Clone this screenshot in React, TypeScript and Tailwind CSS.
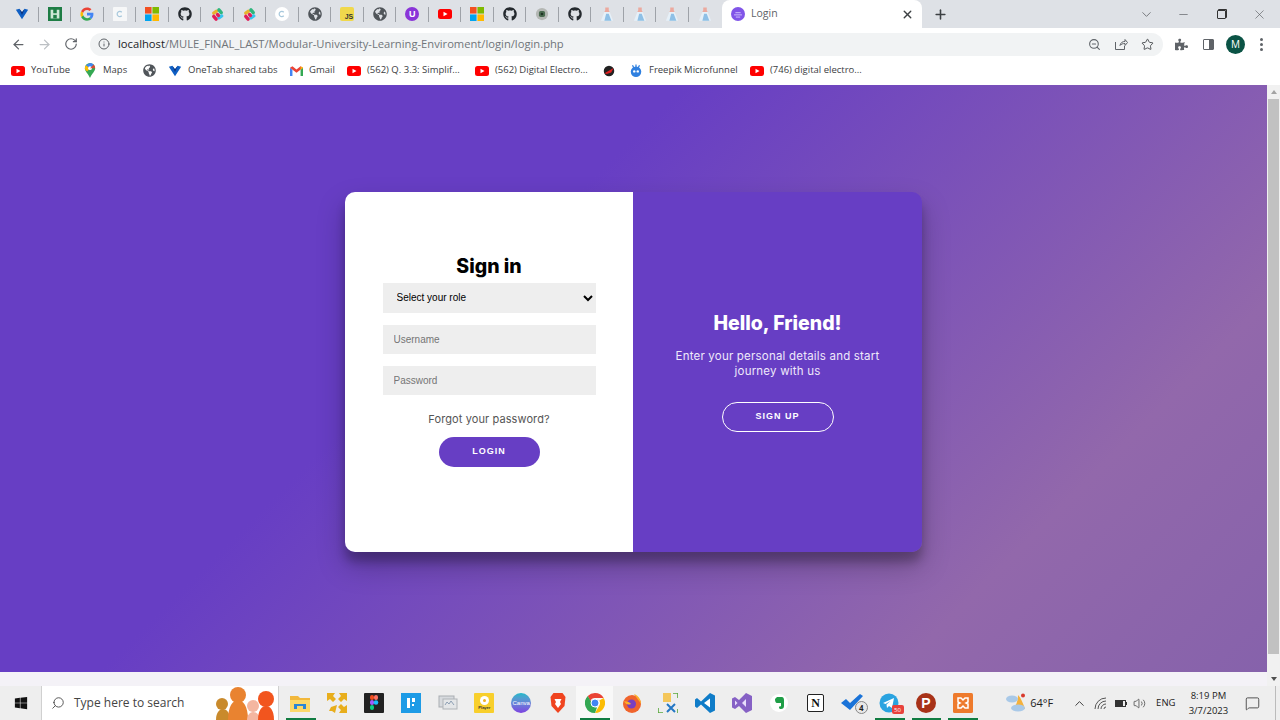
import { ArrowLeft, ArrowRight, RotateCw, Info, ZoomOut, Star, ChevronDown, Minus, X, Plus, Search, Volume2, ChevronUp, MessageSquare } from 'lucide-react'
import { FaGithub, FaGlobeAmericas, FaWindows, FaPuzzlePiece } from 'react-icons/fa'
import type { ReactNode } from 'react'

// favicons
const OneTab = ({ s = 14 }: { s?: number }) => (
  <svg width={s} height={s} viewBox="0 0 16 16"><path d="M1 3l4-1 3 4 3-4 4 1-7 11z" fill="#0f5fc4" /><path d="M5 2l3 4 3-4-3 7z" fill="#0a2f7a" /></svg>
)
const Sheet = () => (
  <svg width="14" height="14" viewBox="0 0 16 16"><rect width="16" height="16" fill="#1e7d45" /><path d="M3 3h3v4h4V3h3v10H3z" fill="#cfe8d6" /><rect x="6" y="9" width="4" height="4" fill="#1e7d45" /></svg>
)
const GoogleG = () => (
  <svg width="14" height="14" viewBox="0 0 48 48">
    <path fill="#4285f4" d="M46 24.5c0-1.6-.1-3.100-.4-4.500H24v9h12.400c-.5 2.800-2.100 5.200-4.500 6.800l7 5.400C43 37 46 31.300 46 24.500z" />
    <path fill="#34a853" d="M24 47c6.200 0 11.400-2 15-5.500l-7-5.400c-2 1.300-4.600 2.100-8 2.100-6 0-11.100-4-12.900-9.500l-7.300 5.600C7.500 41.800 15.200 47 24 47z" />
    <path fill="#fbbc05" d="M11.100 29c-.5-1.400-.7-3-.7-4.500s.3-3.100.7-4.500l-7.300-5.600C2.300 17.500 1.500 20.900 1.500 24.500s.8 7 2.300 10z" />
    <path fill="#ea4335" d="M24 10.500c3.400 0 6.400 1.200 8.800 3.400l6.500-6.500C35.400 3.800 30.200 1.500 24 1.500 15.200 1.500 7.500 6.700 3.800 14.400l7.300 5.600C12.900 14.500 18 10.500 24 10.500z" />
  </svg>
)
const PaleSquare = () => (
  <svg width="14" height="14" viewBox="0 0 16 16"><rect width="16" height="16" rx="1" fill="#f6f7f8" /><path d="M10 6a3 3 0 1 0 0 4" stroke="#a8c8dc" strokeWidth="1.400" fill="none" /></svg>
)
const PaleCircle = () => (
  <svg width="14" height="14" viewBox="0 0 16 16"><circle cx="8" cy="8" r="8" fill="#fff" /><path d="M10 6a3 3 0 1 0 0 4" stroke="#a8c8dc" strokeWidth="1.400" fill="none" /></svg>
)
const MsGrid = () => (
  <svg width="14" height="14" viewBox="0 0 16 16"><rect width="7.500" height="7.500" fill="#f25022" /><rect x="8.500" width="7.500" height="7.500" fill="#7fba00" /><rect y="8.500" width="7.500" height="7.500" fill="#00a4ef" /><rect x="8.500" y="8.500" width="7.500" height="7.500" fill="#ffb900" /></svg>
)
const Slack = () => (
  <svg width="15" height="15" viewBox="0 0 16 16" strokeWidth="3.600" strokeLinecap="round">
    <path d="M4 6.500l3-2" stroke="#e8b32e" /><path d="M9.500 3l2.500 3" stroke="#2eb67d" /><path d="M12.500 9.500l-3 2" stroke="#36c5f0" /><path d="M6.500 13L4 10" stroke="#e01e5a" /><path d="M8 8l1 1" stroke="#e01e5a" />
  </svg>
)
const Gh = () => <FaGithub size={14} color="#24292e" />
const Globe = ({ s = 13 }: { s?: number }) => <FaGlobeAmericas size={s} color="#50555a" />
const JsBox = () => (
  <div className="w-[14px] h-[14px] rounded-[2px] bg-[#f0d84c] flex items-end justify-end text-[7px] leading-[9px] font-bold text-[#333] pr-[1px] font-['Liberation_Sans',sans-serif]">JS</div>
)
const PurpleU = () => (
  <div className="w-[14px] h-[14px] rounded-full bg-[#8a35d8] flex items-center justify-center text-[9px] leading-none font-bold text-white font-['Liberation_Sans',sans-serif]">U</div>
)
const Yt = () => (
  <svg width="14" height="10" viewBox="0 0 14 10"><rect width="14" height="10" rx="2.500" fill="#f00" /><path d="M5.500 2.700v4.600L9.500 5z" fill="#fff" /></svg>
)
const Chip = () => (
  <svg width="14" height="14" viewBox="0 0 16 16"><circle cx="8" cy="8" r="7" fill="#b4b7b4" /><rect x="4.500" y="4.500" width="7" height="7" rx="2" fill="#4a6a50" /><circle cx="8" cy="8" r="1.500" fill="#1f3324" /></svg>
)
const Flask = () => (
  <svg width="14" height="15" viewBox="0 0 16 16"><path d="M6 0h4v3l1 2H5l1-2z" fill="#eca99e" /><path d="M5 5h6l4 10H1z" fill="#e6f0f8" /><path d="M7 7h3l3 8H5z" fill="#8fc0e6" /></svg>
)
const TabLogo = () => (
  <svg width="14" height="14" viewBox="0 0 16 16"><circle cx="8" cy="8" r="8" fill="#8155e8" /><path d="M3.500 9h9M5 6.500h6M5.500 11.500h5" stroke="#d9ccff" strokeWidth="1" /></svg>
)
const Maps = () => (
  <svg width="12" height="15" viewBox="0 0 12 16"><path d="M6 0a5.500 5.500 0 0 1 5.500 5.500C11.500 9 8 11 6 16 4 11 .5 9 .5 5.500A5.500 5.500 0 0 1 6 0z" fill="#34a853" /><path d="M1.500 2.500L6 0a5.500 5.500 0 0 1 4 1.700L6 5.500z" fill="#4285f4" /><path d="M.5 5.500c0-1 .3-2.200 1-3L6 5.500 3 9C1.500 8 .5 7 .5 5.500z" fill="#fbbc05" /><circle cx="6" cy="5.500" r="2" fill="#fff" /><path d="M10 1.700a5.500 5.500 0 0 1 1.500 3.800L6 5.500z" fill="#ea4335" opacity=".9" /></svg>
)
const Gmail = () => (
  <svg width="13" height="10" viewBox="0 0 16 12"><path d="M0 2v10h3V4.500z" fill="#4285f4" /><path d="M16 2v10h-3V4.500z" fill="#34a853" /><path d="M0 2l3-2 5 4 5-4 3 2-8 6z" fill="#ea4335" /><path d="M13 0l3 2-3 2.500z" fill="#fbbc05" /></svg>
)
const RedSwirl = () => (
  <svg width="12" height="12" viewBox="0 0 16 16"><circle cx="8" cy="8" r="7" fill="#222" /><path d="M2 11L14 4l-3 6-6 2z" fill="#e02020" /></svg>
)
const Freepik = () => (
  <svg width="14" height="15" viewBox="0 0 16 16"><circle cx="8" cy="9.500" r="6" fill="#2f80e0" /><circle cx="6" cy="9" r="1.400" fill="#fff" /><circle cx="10" cy="9" r="1.400" fill="#fff" /><path d="M8 1v3M4 2l1.500 3M12 2l-1.500 3" stroke="#2f80e0" strokeWidth="1.400" /></svg>
)

const tabIcons: ReactNode[] = [
  <OneTab />, <Sheet />, <GoogleG />, <PaleSquare />, <MsGrid />, <Gh />, <Slack />, <Slack />, <PaleCircle />, <Globe s={14} />, <JsBox />, <Globe s={14} />, <PurpleU />, <Yt />, <MsGrid />, <Gh />, <Chip />, <Gh />, <Flask />, <Flask />, <Flask />, <Flask />,
]

const bookmarks: { icon: ReactNode; text?: string; w: string }[] = [
  { icon: <Yt />, text: 'YouTube', w: 'w-[72px]' },
  { icon: <Maps />, text: 'Maps', w: 'w-[59px]' },
  { icon: <Globe />, w: 'w-[26px]' },
  { icon: <OneTab />, text: 'OneTab shared tabs', w: 'w-[121px]' },
  { icon: <Gmail />, text: 'Gmail', w: 'w-[58px]' },
  { icon: <Yt />, text: '(562) Q. 3.3: Simplif...', w: 'w-[128px]' },
  { icon: <Yt />, text: '(562) Digital Electro...', w: 'w-[127px]' },
  { icon: <RedSwirl />, w: 'w-[27px]' },
  { icon: <Freepik />, text: 'Freepik Microfunnel', w: 'w-[121px]' },
  { icon: <Yt />, text: '(746) digital electro...', w: 'w-[120px]' },
]

// taskbar apps
const Explorer = () => (
  <svg width="20" height="18" viewBox="0 0 20 18"><path d="M0 2h8l2 2h10v3H0z" fill="#f2b83c" /><path d="M0 6h20v12H0z" fill="#fbd96a" /><path d="M4 10h12v5h-3v-3H7v3H4z" fill="#2a86d6" /></svg>
)
const YellowArrows = () => (
  <svg width="20" height="20" viewBox="0 0 20 20"><path d="M0 0h8L6 3l3 3-3 3-3-3-3 2zM20 0v8l-3-2-3 3-3-3 3-3-2-3zM20 20h-8l2-3-3-3 3-3 3 3 3-2zM10 12l-2 8-3-2-3 0 2-4z" fill="#e8ae1c" /></svg>
)
const Figma = () => (
  <svg width="20" height="20" viewBox="0 0 20 20"><rect width="20" height="20" rx="1" fill="#222" /><rect x="6" y="2" width="4" height="5" rx="2" fill="#f24e1e" /><rect x="10" y="2" width="4" height="5" rx="2" fill="#ff7262" /><rect x="6" y="7" width="4" height="5" rx="2" fill="#a259ff" /><circle cx="12" cy="9.500" r="2.300" fill="#1abcfe" /><rect x="6" y="12" width="4" height="5" rx="2" fill="#0acf83" /></svg>
)
const BlueSquare = () => (
  <svg width="20" height="20" viewBox="0 0 20 20"><rect width="20" height="20" fill="#1d9be6" /><rect x="6" y="5" width="3" height="10" fill="#fff" /><rect x="11" y="5" width="3" height="4" fill="#fff" /><rect x="11" y="11" width="2" height="2" fill="#fff" /></svg>
)
const Monitor = () => (
  <svg width="20" height="18" viewBox="0 0 20 18"><rect x="1" y="2" width="15" height="11" fill="#d7dade" stroke="#a9adb2" /><rect x="5" y="5" width="14" height="10" fill="#e4e6e8" stroke="#b0b4b8" /><path d="M7 11l2-3 2 2 2-3 3 4" stroke="#8ea0b4" fill="none" /></svg>
)
const Player = () => (
  <div className="w-5 h-5 bg-[#f8cf2c] rounded-[1px] flex flex-col items-center justify-center">
    <div className="w-[9px] h-[9px] rounded-full bg-white flex items-center justify-center"><div className="w-[3px] h-[3px] rounded-full bg-[#f0b020]" /></div>
    <span className="text-[4px] leading-[5px] font-bold text-[#333] font-['Liberation_Sans',sans-serif]">Player</span>
  </div>
)
const Canva = () => (
  <div className="w-5 h-5 rounded-full bg-gradient-to-b from-[#19b9c9] to-[#7b3ee0] flex items-center justify-center text-[6px] text-white font-['Liberation_Sans',sans-serif]">Canva</div>
)
const Brave = () => (
  <svg width="18" height="20" viewBox="0 0 17 20"><path d="M4 0h9l3 4-1 9-6.500 7L2 13 1 4z" fill="#f0441f" /><path d="M5 6h7l-1.500 3 1 2-3 4-3-4 1-2z" fill="#fff" /></svg>
)
const Chrome = () => (
  <svg width="20" height="20" viewBox="0 0 20 20">
    <path d="M10 0a10 10 0 0 1 8.700 5H10a5 5 0 0 0-4.700 3.300L2.800 3A10 10 0 0 1 10 0z" fill="#ea4335" />
    <path d="M18.700 5A10 10 0 0 1 10 20l4.300-7.500A5 5 0 0 0 14.300 7.500z" fill="#fbbc05" />
    <path d="M10 20A10 10 0 0 1 2.800 3l4.300 7.500A5 5 0 0 0 12 14.600z" fill="#34a853" />
    <circle cx="10" cy="10" r="4" fill="#4285f4" stroke="#fff" strokeWidth="1" />
  </svg>
)
const Firefox = () => (
  <svg width="20" height="20" viewBox="0 0 20 20"><circle cx="10" cy="11" r="9" fill="#f0642c" /><path d="M12 1c5 2 7 6 7 10-2-4-4-5-7-10z" fill="#fcb12a" /><circle cx="9.500" cy="11" r="4.500" fill="#7a3fc0" /><path d="M2 8c2 1 5 0 7 3-3 1-5 1-7-3z" fill="#fcb12a" /></svg>
)
const Tools = () => (
  <svg width="20" height="20" viewBox="0 0 20 20" fill="none"><path d="M5 0h8v9H5z" fill="#f4c65a" /><path d="M15 0h5v5M0 20v-5M0 20h5M20 20v-4" stroke="#5aa83c" strokeWidth="1.600" /><path d="M9 11l8 8M17 11l-8 8" stroke="#2477c4" strokeWidth="2" /></svg>
)
const VsCode = () => (
  <svg width="20" height="20" viewBox="0 0 20 20"><path d="M15 0l5 2.500v15L15 20 6 11.500 2 15l-2-1.500V6.500L2 5l4 3.500z" fill="#0f7cc8" /><path d="M15 5.500L9 10l6 4.500z" fill="#fff" /></svg>
)
const VisualStudio = () => (
  <svg width="20" height="20" viewBox="0 0 20 20"><path d="M14 0l6 3v14l-6 3-7-7-4 3-3-1.500v-9L3 4l4 3z" fill="#8661c5" /><path d="M14 6l-4 4 4 4z" fill="#e8defc" /><path d="M3 7.500v5l2.500-2.500z" fill="#e8defc" /></svg>
)
const Evernote = () => (
  <svg width="18" height="18" viewBox="0 0 18 18"><circle cx="9" cy="9" r="9" fill="#fff" /><path d="M5 5l2-2h5c1 0 2 1 2 3v6c0 2-1 3-3 3-1 0-2-.5-2-1.500 0-1 1-1.500 2-1.200V9H7C5.500 9 5 7 5 5z" fill="#1f9e47" /></svg>
)
const Notion = () => (
  <div className="w-[17px] h-[18px] bg-white border-[1.5px] border-[#222] rounded-[2px] flex items-center justify-center text-[12px] leading-none font-bold text-[#111] font-['Liberation_Serif',serif]">N</div>
)
const Check = () => (
  <svg width="24" height="20" viewBox="0 0 24 20"><path d="M1 10l5-4 4 4L20 1l3 2-13 14z" fill="#1a73d8" /></svg>
)
const Telegram = () => (
  <svg width="20" height="20" viewBox="0 0 20 20"><circle cx="10" cy="10" r="9.500" fill="#2aa3e0" /><path d="M4 10l11-5-2 10-3-2-2 2-.5-3.500 4-3.500-5 3z" fill="#fff" /></svg>
)
const Psiphon = () => (
  <div className="w-5 h-5 rounded-full bg-[#a83218] flex items-center justify-center text-[14px] leading-none font-bold text-white font-['Liberation_Sans',sans-serif]">P</div>
)
const Xampp = () => (
  <svg width="20" height="20" viewBox="0 0 20 20" fill="none"><rect width="20" height="20" rx="1.500" fill="#ee7a2c" /><path d="M5 5h3l2 2 2-2h3v4l-2 1 2 1v4h-3l-2-2-2 2H5v-4l2-1-2-1z" stroke="#fff" strokeWidth="1.500" /></svg>
)

const apps: { icon: ReactNode; on?: boolean; active?: boolean; extra?: ReactNode }[] = [
  { icon: <Explorer />, on: true },
  { icon: <YellowArrows /> },
  { icon: <Figma /> },
  { icon: <BlueSquare /> },
  { icon: <Monitor /> },
  { icon: <Player /> },
  { icon: <Canva /> },
  { icon: <Brave /> },
  { icon: <Chrome />, on: true, active: true },
  { icon: <Firefox /> },
  { icon: <Tools /> },
  { icon: <VsCode /> },
  { icon: <VisualStudio /> },
  { icon: <Evernote /> },
  { icon: <Notion /> },
  {
    icon: <Check />,
    extra: <span className="absolute right-[3px] bottom-[6px] w-[13px] h-[13px] rounded-full bg-[#e8e8e8] border border-[#888] flex items-center justify-center text-[8px] leading-none font-bold text-[#222]">4</span>,
  },
  {
    icon: <Telegram />,
    on: true,
    extra: <span className="absolute right-[4px] bottom-[6px] w-[12px] h-[9px] rounded-[2px] bg-[#e8413c] flex items-center justify-center text-[6px] leading-none text-white">50</span>,
  },
  { icon: <Psiphon />, on: true },
  { icon: <Xampp />, on: true },
]

function ChromeTop() {
  return (
    <>
      {/* tab strip */}
      <div className="h-[28px] bg-[#dee1e6] flex items-center shrink-0 pl-[6px]">
        {tabIcons.map((icon, i) => (
          <div key={i} className="w-[32.500px] h-full flex items-center justify-center relative">
            {icon}
            {i < 21 && <span className="absolute right-0 top-[7px] h-[15px] w-px bg-[#9ea2a8]" />}
          </div>
        ))}
        <div className="ml-[1px] w-[200px] h-full bg-white rounded-t-[8px] flex items-center pl-[9px] pr-[8px] text-[10.500px] text-[#5f6368]">
          <TabLogo />
          <span className="ml-[6px] flex-1">Login</span>
          <X size={13} strokeWidth={2.500} color="#3c4043" />
        </div>
        <Plus size={15} strokeWidth={2.500} color="#3c4043" className="ml-[11px]" />
        <div className="ml-auto flex items-center text-[#55585c]">
          <ChevronDown size={15} strokeWidth={1.200} className="mr-[23px]" />
          <Minus size={13} strokeWidth={1.200} className="mr-[27px]" />
          <div className="w-[9px] h-[9px] border border-[#333] rounded-[1px] mr-[26px] shadow-[1px_-1px_0_0_#333]" />
          <X size={15} strokeWidth={1} className="mr-[13px]" />
        </div>
      </div>
      {/* toolbar */}
      <div className="h-[28px] pt-[4px] bg-white flex items-center shrink-0">
        <ArrowLeft size={15} color="#5f6368" className="ml-[11px]" />
        <ArrowRight size={15} color="#bcc0c4" className="ml-[11px]" />
        <RotateCw size={14} color="#5f6368" className="ml-[12px]" />
        <div className="ml-[12px] w-[1073px] h-[23px] rounded-full bg-[#f1f3f4] flex items-center pl-[8px] pr-[9px]">
          <Info size={12} color="#5f6368" />
          <span className="ml-[8px] text-[11.200px] text-[#202124]">localhost<span className="text-[#70757a]">/MULE_FINAL_LAST/Modular-University-Learning-Enviroment/login/login.php</span></span>
          <div className="ml-auto flex items-center gap-[13px]">
            <ZoomOut size={13} color="#5f6368" />
            <svg width="14" height="14" viewBox="0 0 14 14" fill="none" stroke="#5f6368" strokeWidth="1"><path d="M1.500 5v7.500h9V9M6 8.500c.5-3 2.500-4 5-4V2.500l2.500 3-2.500 3V6.500c-2 0-4 .5-5 2z" /></svg>
            <Star size={13} color="#3c4043" strokeWidth={1.600} />
          </div>
        </div>
        <FaPuzzlePiece size={13} color="#5f6368" className="ml-[12px]" />
        <div className="ml-[15px] w-[11px] h-[11px] border-[1.500px] border-[#5f6368] rounded-[1px] flex justify-end"><div className="w-[4px] h-full bg-[#5f6368]" /></div>
        <div className="ml-[12px] w-[19px] h-[19px] rounded-full bg-[#0b5345] flex items-center justify-center text-[10px] text-white font-['Open_Sans',sans-serif]">M</div>
        <div className="ml-[15px] flex flex-col gap-[2px]">
          <span className="w-[3px] h-[3px] rounded-full bg-[#5f6368]" />
          <span className="w-[3px] h-[3px] rounded-full bg-[#5f6368]" />
          <span className="w-[3px] h-[3px] rounded-full bg-[#5f6368]" />
        </div>
      </div>
      {/* bookmarks */}
      <div className="h-[29px] bg-white flex items-center shrink-0 pl-[11px] text-[9.500px] text-[#3c4043]">
        {bookmarks.map((b, i) => (
          <div key={i} className={`${b.w} shrink-0 flex items-center gap-[6px] whitespace-nowrap`}>
            <span className="w-[14px] flex justify-center">{b.icon}</span>
            {b.text && <span>{b.text}</span>}
          </div>
        ))}
      </div>
    </>
  )
}

function LoginCard() {
  return (
    <div className="w-[577px] h-[360px] flex rounded-[10px] overflow-hidden shadow-[0_14px_28px_rgba(0,0,0,0.25),0_10px_10px_rgba(0,0,0,0.22)] font-['Inter',sans-serif] mt-[-14px]">
      <form className="w-[288px] bg-white flex flex-col items-center pt-[62px]">
        <h1 className="text-[19.500px] leading-[24px] font-extrabold text-black">Sign in</h1>
        <select className="mt-[5px] w-[213px] h-[30px] bg-[#eeeeee] pl-[10px] pr-[4px] text-[10px] text-black font-['Liberation_Sans',sans-serif] outline-none">
          <option>Select your role</option>
        </select>
        <input placeholder="Username" className="mt-[12px] w-[213px] h-[29px] bg-[#eeeeee] px-[11px] text-[10px] placeholder:text-[#757575] font-['Liberation_Sans',sans-serif] outline-none" />
        <input placeholder="Password" className="mt-[12px] w-[213px] h-[29px] bg-[#eeeeee] px-[11px] text-[10px] placeholder:text-[#757575] font-['Liberation_Sans',sans-serif] outline-none" />
        <a href="#" className="mt-[16px] text-[11px] leading-[16px] text-[#555] tracking-[0.1px]">Forgot your password?</a>
        <button type="button" className="mt-[10px] w-[101px] h-[30px] rounded-full bg-[#673ec4] text-white text-[9px] font-bold tracking-[1px] font-['Liberation_Sans',sans-serif]">LOGIN</button>
      </form>
      <div className="flex-1 bg-[#673ec4] flex flex-col items-center justify-center text-white">
        <h2 className="text-[19.500px] leading-[24px] font-extrabold">Hello, Friend!</h2>
        <p className="mt-[14px] w-[230px] text-center text-[11.500px] leading-[15px] tracking-[0.2px] text-[#efe9fb]">Enter your personal details and start journey with us</p>
        <button type="button" className="mt-[23px] w-[112px] h-[30px] rounded-full border border-white text-[9px] font-bold tracking-[1px] font-['Liberation_Sans',sans-serif]">SIGN UP</button>
      </div>
    </div>
  )
}

function Taskbar() {
  return (
    <div className="h-[34px] bg-[#eeeeee] flex items-center shrink-0 font-['Open_Sans',sans-serif] text-[#222]">
      <div className="w-[41px] flex justify-center"><FaWindows size={14} color="#111" /></div>
      <div className="w-[238px] h-full bg-white border-x border-[#d0d0d0] relative flex items-center pl-[9px] text-[12px] text-[#444]">
        <Search size={14} strokeWidth={1.500} className="-scale-x-100" />
        <span className="ml-[9px]">Type here to search</span>
        <svg width="66" height="34" viewBox="0 0 66 34" className="absolute right-0 top-0">
          <circle cx="10" cy="18" r="6" fill="#c98a2c" /><path d="M4 34c0-7 3-11 7-11s7 4 7 11z" fill="#c98a2c" />
          <circle cx="26" cy="9" r="8" fill="#e98330" /><path d="M16 34c0-14 5-20 10-20s10 6 10 20z" fill="#e98330" />
          <circle cx="41" cy="20" r="6" fill="#f4b6a0" /><path d="M35 34c0-5 3-8 6-8s7 3 7 8z" fill="#f4b6a0" />
          <circle cx="54" cy="13" r="8" fill="#f2551e" /><path d="M46 34c0-10 4-14 8-14s8 4 8 14z" fill="#f2551e" />
        </svg>
      </div>
      <div className="flex h-full ml-[3px]">
        {apps.map((a, i) => (
          <div key={i} className={`w-[36.800px] h-full relative flex items-center justify-center ${a.active ? 'bg-[#f8f8f8]' : ''}`}>
            {a.icon}
            {a.extra}
            {a.on && <span className="absolute left-[4px] right-[3px] bottom-0 h-[2px] bg-[#107c41]" />}
          </div>
        ))}
      </div>
      <div className="ml-[24px] flex items-center">
        <svg width="22" height="20" viewBox="0 0 22 20"><path d="M13 2c3 3 5 8 7 14H8c3-3 5-8 5-14z" fill="#f5b13c" /><ellipse cx="7" cy="6" rx="6" ry="3.500" fill="#a9c9e8" /><ellipse cx="13" cy="15" rx="7" ry="3.500" fill="#a9c9e8" /><circle cx="18" cy="2.500" r="2" fill="#d8392c" /></svg>
        <span className="ml-[3px] text-[11px]">64°F</span>
      </div>
      <ChevronUp size={15} strokeWidth={1.500} color="#333" className="ml-[19px]" />
      <svg width="13" height="13" viewBox="0 0 13 13" fill="none" stroke="#555" strokeWidth="1" className="ml-[7px]"><path d="M1 12a11 11 0 0 1 11-11M4 12a8 8 0 0 1 8-8M7 12a5 5 0 0 1 5-5M10 12a2 2 0 0 1 2-2" /></svg>
      <div className="ml-[8px] flex items-center">
        <div className="w-[11px] h-[7px] border border-[#333] flex"><div className="w-[7px] bg-[#333]" /></div>
        <div className="w-[1px] h-[3px] bg-[#333]" />
      </div>
      <Volume2 size={13} strokeWidth={1.300} color="#333" className="ml-[6px]" />
      <span className="ml-[10px] text-[9.500px]">ENG</span>
      <div className="ml-[8px] w-[50px] text-center text-[9.500px] leading-[15px]">
        <div>8:19 PM</div>
        <div>3/7/2023</div>
      </div>
      <MessageSquare size={15} strokeWidth={1.200} color="#222" className="ml-[12px]" />
      <span className="ml-[15px] h-full w-px bg-[#bbb]" />
    </div>
  )
}

export default function App() {
  return (
    <div className="w-[1280px] h-[720px] flex flex-col overflow-hidden font-['Open_Sans',sans-serif]">
      <ChromeTop />
      <div className="flex-1 flex min-h-0">
        <div className="flex-1 flex flex-col">
          <main className="flex-1 bg-[linear-gradient(135deg,#673ec4_37%,#9268ab_80%,#8662ab_100%)] flex items-center justify-center">
            <LoginCard />
          </main>
          <div className="h-[14px] bg-[#f4f2f7]" />
        </div>
        <div className="w-[13px] bg-[#f1f1f1] flex flex-col items-center py-[5px]">
          <span className="w-0 h-0 border-x-[3.500px] border-x-transparent border-b-[4px] border-b-[#a3a3a3]" />
          <div className="mt-[5px] w-[11px] h-[555px] bg-[#c1c1c1]" />
          <span className="mt-auto w-0 h-0 border-x-[3.500px] border-x-transparent border-t-[4px] border-t-[#505050]" />
        </div>
      </div>
      <Taskbar />
    </div>
  )
}
